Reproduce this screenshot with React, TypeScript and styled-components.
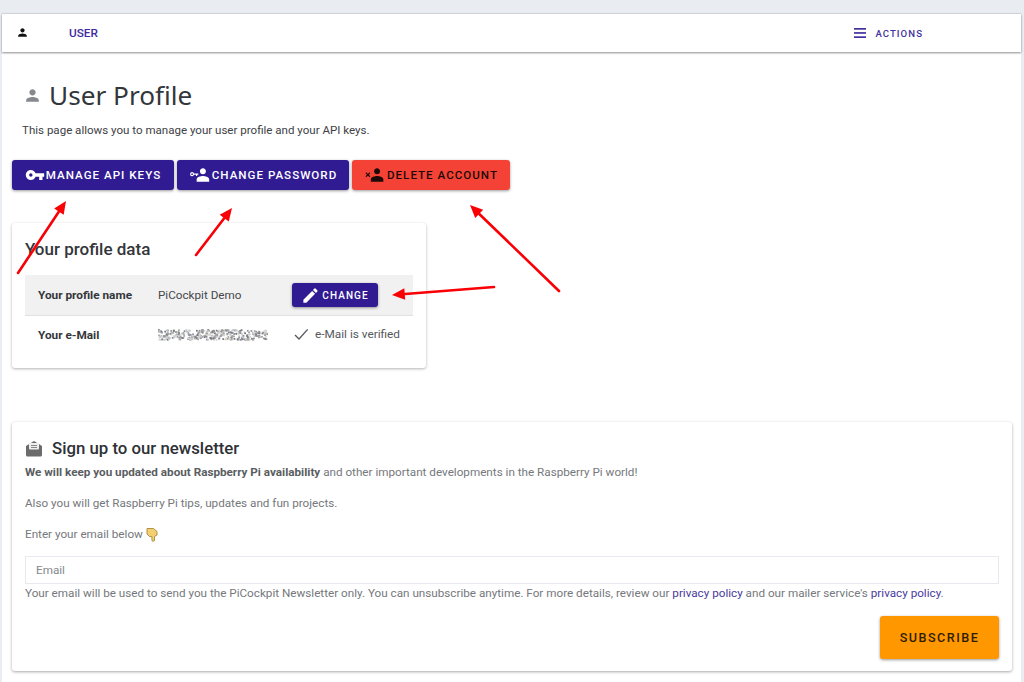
import * as React from 'react'
import styled, { createGlobalStyle } from 'styled-components'

const GlobalStyle = createGlobalStyle`
  html, body {
    margin: 0;
    padding: 0;
    height: 682px;
    overflow: hidden;
    background: #e9edf2;
    font-family: Roboto, "Liberation Sans", sans-serif;
  }
`

const Page = styled.div`
  position: relative;
  width: 1024px;
  height: 682px;
  padding: 14px 3px 0 2px;
  box-sizing: border-box;
  overflow: hidden;
`

const Surface = styled.div`
  background: #fff;
  height: 668px;
  border-radius: 2px 2px 0 0;
`

const TopBar = styled.div`
  height: 38px;
  display: flex;
  align-items: center;
  background: #fff;
  box-shadow: 0 1px 2px rgba(0, 0, 0, 0.45), 0 -1px 1px rgba(0, 0, 0, 0.08);
  padding: 0 0 2px 14px;
  box-sizing: border-box;
`

const UserLink = styled.span`
  margin-top: 2px;
  margin-left: 40px;
  font-size: 11.8px;
  font-weight: 500;
  color: #3f2ba0;
`

const ActionsGroup = styled.div`
  margin-top: 2px;
  margin-left: auto;
  margin-right: 98px;
  display: flex;
  align-items: center;
  gap: 9px;
  font-size: 9.6px;
  font-weight: 500;
  letter-spacing: 1.05px;
  color: #43329e;
`

const Content = styled.div`
  padding: 25px 9px 0 10px;
`

const TitleRow = styled.div`
  display: flex;
  align-items: center;
  gap: 7px;
  padding-left: 11px;
  height: 36px;
`

const Title = styled.h1`
  margin: 0;
  font-family: "Noto Sans", sans-serif;
  font-size: 26.2px;
  font-weight: 400;
  color: #33363a;
`

const Lead = styled.p`
  margin: 9px 0 0 10px;
  font-size: 11.55px;
  line-height: 16px;
  color: #3e4145;
`

const ButtonRow = styled.div`
  margin-top: 22px;
  display: flex;
  gap: 3px;
`

const ActionButton = styled.button<{ $tone: 'primary' | 'danger'; $w: number }>`
  width: ${p => p.$w}px;
  height: 30px;
  border: 0;
  border-radius: 3px;
  padding: 0;
  display: flex;
  align-items: center;
  justify-content: center;
  gap: 1px;
  font-family: inherit;
  font-size: 11.6px;
  font-weight: 500;
  letter-spacing: 1px;
  background: ${p => (p.$tone === 'danger' ? '#f44336' : '#311b92')};
  color: ${p => (p.$tone === 'danger' ? '#1c0a08' : '#fff')};
  box-shadow: 0 1px 3px rgba(0, 0, 0, 0.4);
`

const ProfileCard = styled.section`
  margin-top: 33px;
  width: 414px;
  height: 145px;
  background: #fff;
  border-radius: 3px;
  padding: 14px 13px 0;
  box-sizing: border-box;
  box-shadow: 0 1px 3px rgba(0, 0, 0, 0.3);
`

const CardTitle = styled.h2`
  margin: 0;
  font-size: 17px;
  line-height: 24px;
  font-weight: 500;
  color: #33363a;
`

const DataRow = styled.div<{ $shaded?: boolean }>`
  display: flex;
  align-items: center;
  height: ${p => (p.$shaded ? 40 : 38)}px;
  margin-top: ${p => (p.$shaded ? 14 : 0)}px;
  padding-left: 13px;
  font-size: 11.7px;
  color: #44474b;
  background: ${p => (p.$shaded ? '#f1f1f1' : 'transparent')};
  border-bottom: ${p => (p.$shaded ? '1px solid #dfe1e4' : '0')};
`

const DataLabel = styled.span`
  width: 120px;
  font-size: 11.8px;
  font-weight: 700;
  color: #33363a;
`

const DataValue = styled.span`
  width: 134px;
`

const ChangeButton = styled.button`
  width: 86px;
  height: 24px;
  border: 0;
  border-radius: 3px;
  padding: 0;
  display: flex;
  align-items: center;
  justify-content: center;
  gap: 2px;
  font-family: inherit;
  font-size: 10px;
  font-weight: 500;
  letter-spacing: 1.1px;
  background: #311b92;
  color: #fff;
  box-shadow: 0 1px 3px rgba(0, 0, 0, 0.4);
`

const Verified = styled.span`
  display: flex;
  align-items: center;
  gap: 6px;
  margin-top: -2px;
  margin-left: 1px;
  font-size: 11.8px;
  color: #55585c;
`

const NewsCard = styled.section`
  margin-top: 54px;
  height: 249px;
  background: #fff;
  border-radius: 3px;
  padding: 14px 13px 0;
  box-sizing: border-box;
  box-shadow: 0 1px 3px rgba(0, 0, 0, 0.35);
`

const NewsHeading = styled.div`
  display: flex;
  align-items: center;
  gap: 9px;
  height: 24px;
  margin-bottom: 4px;
  font-size: 16.8px;
  font-weight: 500;
  color: #2e3135;
`

const NewsText = styled.p`
  margin: 0 0 15px;
  font-size: 11.7px;
  line-height: 16px;
  color: #75787c;

  b {
    color: #5a5d61;
    font-weight: 700;
  }
`

const EnterText = styled(NewsText)`
  display: flex;
  align-items: center;
  gap: 3px;
  margin-bottom: 14px;
`

const EmailField = styled.div`
  height: 28px;
  border: 1px solid #e8e9ef;
  box-sizing: border-box;
  display: flex;
  align-items: center;
  padding-left: 10px;
  font-size: 11.7px;
  color: #85888c;
`

const FinePrint = styled.p`
  margin: 1px 0 0;
  font-size: 11.7px;
  line-height: 16px;
  white-space: nowrap;
  color: #75787c;

  a {
    color: #4a3a9e;
    text-decoration: none;
  }
`

const SubmitRow = styled.div`
  display: flex;
  justify-content: flex-end;
  margin-top: 15px;
`

const SubscribeButton = styled.button`
  width: 119px;
  height: 43px;
  border: 0;
  border-radius: 3px;
  padding: 0;
  font-family: inherit;
  font-size: 12.6px;
  font-weight: 500;
  letter-spacing: 1.5px;
  background: #ff9800;
  color: #2e1c00;
  box-shadow: 0 1px 3px rgba(0, 0, 0, 0.4);
`

const ArrowLayer = styled.svg`
  position: absolute;
  left: 0;
  top: 0;
  pointer-events: none;
`

const BlurredMail = styled.svg`
  filter: blur(0.5px);
  display: block;
`

const PersonIcon = ({ size, color }: { size: number; color: string }) => (
  <svg width={size} height={size} viewBox="0 0 24 24" fill={color}>
    <path d="M12 12c2.200 0 4-1.800 4-4s-1.800-4-4-4-4 1.800-4 4 1.800 4 4 4zm0 2c-2.700 0-8 1.300-8 4v2h16v-2c0-2.700-5.300-4-8-4z" />
  </svg>
)

const KeyIcon = () => (
  <svg width="20" height="20" viewBox="0 0 24 24" fill="#fff">
    <path d="M12.650 10C11.830 7.670 9.610 6 7 6c-3.310 0-6 2.690-6 6s2.690 6 6 6c2.610 0 4.830-1.670 5.650-4H17v4h4v-4h2v-4H12.650zM7 14c-1.100 0-2-.9-2-2s.9-2 2-2 2 .9 2 2-.9 2-2 2z" />
  </svg>
)

const UserKeyIcon = () => (
  <svg width="22" height="20" viewBox="0 0 26 24" fill="#fff">
    <path d="M16.500 11c2 0 3.600-1.600 3.600-3.600S18.500 3.800 16.500 3.800s-3.600 1.600-3.600 3.600 1.600 3.600 3.600 3.600zm0 2.200c-2.600 0-7.500 1.300-7.500 3.700V20h15v-3.100c0-2.400-4.900-3.700-7.500-3.700z" />
    <path d="M3.500 8.500a2.500 2.500 0 0 1 2.400 1.800H11v1.500H9.700v1.500H8.200v-1.500H5.900a2.500 2.500 0 1 1-2.400-3.300zm0 1.500a1 1 0 1 0 0 2 1 1 0 0 0 0-2z" />
  </svg>
)

const UserRemoveIcon = () => (
  <svg width="22" height="20" viewBox="0 0 26 24" fill="#1c0a08">
    <path d="M15.500 11c2 0 3.600-1.600 3.600-3.600s-1.600-3.600-3.600-3.600-3.600 1.600-3.600 3.600 1.600 3.600 3.600 3.600zm0 2.200c-2.600 0-7.500 1.300-7.500 3.700V20h15v-3.100c0-2.400-4.900-3.700-7.500-3.700z" />
    <path d="M2.600 8.800l1.900 1.900 1.900-1.900 1 1-1.900 1.900 1.900 1.900-1 1-1.900-1.900-1.900 1.900-1-1 1.900-1.900-1.900-1.900z" />
  </svg>
)

const PencilIcon = () => (
  <svg width="19" height="19" viewBox="0 0 24 24" fill="#fff">
    <path d="M3 17.250V21h3.750L17.810 9.940l-3.750-3.750L3 17.250zM20.710 7.040a1 1 0 0 0 0-1.410l-2.340-2.340a1 1 0 0 0-1.410 0l-1.830 1.830 3.750 3.750 1.830-1.830z" />
  </svg>
)

const CheckIcon = () => (
  <svg width="16" height="16" viewBox="0 0 24 24" fill="none" stroke="#55585c" strokeWidth="2">
    <path d="M3 13.500l6 6L22 5" />
  </svg>
)

const MenuIcon = () => (
  <svg width="12" height="10" viewBox="0 0 12 10" fill="#43329e">
    <rect width="12" height="1.700" />
    <rect y="4.100" width="12" height="1.700" />
    <rect y="8.300" width="12" height="1.700" />
  </svg>
)

const MailIcon = () => (
  <svg width="18" height="17" viewBox="0 0 18 17">
    <path d="M1 6l8-5 8 5v9a1.500 1.500 0 0 1-1.500 1.500h-13A1.500 1.500 0 0 1 1 15z" fill="#6b6b6b" />
    <rect x="4" y="3" width="10" height="6.500" rx="1" fill="#eee" />
    <rect x="6" y="5" width="6" height="1" fill="#888" />
    <rect x="6" y="7" width="6" height="1" fill="#888" />
  </svg>
)

const PointingHand = () => (
  <svg width="12" height="15" viewBox="0 0 12 15">
    <path
      d="M1 1.500h6.500l3.500 3v3.500l-2.500 1.500v3.500a1.300 1.300 0 0 1-2.600 0V9.500H3.500L1 7z"
      fill="#f3cf72"
      stroke="#a98a3c"
      strokeWidth="0.9"
    />
  </svg>
)

// scribbled-out address, the picture has it pixelated
const noiseDots = Array.from({ length: 340 }, (_, i) => {
  const a = Math.abs(Math.sin(i * 12.9898) * 43758.5453) % 1
  const b = Math.abs(Math.sin(i * 78.233) * 24634.6345) % 1
  const shade = ['#8f929c', '#c3c6cc', '#777a82', '#d8d6d0', '#a8a49c'][i % 5]
  return { x: a * 109, y: 1 + b * 10, shade }
})

const RedactedMail = () => (
  <BlurredMail width="110" height="14" viewBox="0 0 110 14">
    {noiseDots.map((d, i) => (
      <rect key={i} x={d.x} y={d.y} width="1.800" height="1.800" fill={d.shade} />
    ))}
  </BlurredMail>
)

const arrows = [
  { from: [18, 273], to: [66, 201] },
  { from: [196, 255], to: [232, 208] },
  { from: [559, 291], to: [470, 205] },
  { from: [494, 287], to: [392, 295] },
]

const Arrows = () => (
  <ArrowLayer width="1024" height="682">
    {arrows.map(({ from, to }, i) => {
      const ang = Math.atan2(to[1] - from[1], to[0] - from[0])
      const head = 14
      const spread = 0.42
      const neck = [to[0] - 10 * Math.cos(ang), to[1] - 10 * Math.sin(ang)]
      const p1 = [to[0] - head * Math.cos(ang - spread), to[1] - head * Math.sin(ang - spread)]
      const p2 = [to[0] - head * Math.cos(ang + spread), to[1] - head * Math.sin(ang + spread)]
      return (
        <g key={i}>
          <line x1={from[0]} y1={from[1]} x2={neck[0]} y2={neck[1]} stroke="#fa0005" strokeWidth="2.6" strokeLinecap="round" />
          <polygon points={`${to[0]},${to[1]} ${p1.join(',')} ${p2.join(',')}`} fill="#fa0005" />
        </g>
      )
    })}
  </ArrowLayer>
)

export default function App() {
  return (
    <Page>
      <GlobalStyle />
      <Surface>
        <TopBar>
          <PersonIcon size={13} color="#111" />
          <UserLink>USER</UserLink>
          <ActionsGroup>
            <MenuIcon />
            ACTIONS
          </ActionsGroup>
        </TopBar>
        <Content>
          <TitleRow>
            <PersonIcon size={19} color="#85888c" />
            <Title>User Profile</Title>
          </TitleRow>
          <Lead>This page allows you to manage your user profile and your API keys.</Lead>
          <ButtonRow>
            <ActionButton $tone="primary" $w={162}>
              <KeyIcon />
              MANAGE API KEYS
            </ActionButton>
            <ActionButton $tone="primary" $w={172}>
              <UserKeyIcon />
              CHANGE PASSWORD
            </ActionButton>
            <ActionButton $tone="danger" $w={158}>
              <UserRemoveIcon />
              DELETE ACCOUNT
            </ActionButton>
          </ButtonRow>
          <ProfileCard>
            <CardTitle>Your profile data</CardTitle>
            <DataRow $shaded>
              <DataLabel>Your profile name</DataLabel>
              <DataValue>PiCockpit Demo</DataValue>
              <ChangeButton>
                <PencilIcon />
                CHANGE
              </ChangeButton>
            </DataRow>
            <DataRow>
              <DataLabel>Your e-Mail</DataLabel>
              <DataValue>
                <RedactedMail />
              </DataValue>
              <Verified>
                <CheckIcon />
                e-Mail is verified
              </Verified>
            </DataRow>
          </ProfileCard>
          <NewsCard>
            <NewsHeading>
              <MailIcon />
              Sign up to our newsletter
            </NewsHeading>
            <NewsText>
              <b>We will keep you updated about Raspberry Pi availability</b> and other important
              developments in the Raspberry Pi world!
            </NewsText>
            <NewsText>Also you will get Raspberry Pi tips, updates and fun projects.</NewsText>
            <EnterText>
              Enter your email below <PointingHand />
            </EnterText>
            <EmailField>Email</EmailField>
            <FinePrint>
              Your email will be used to send you the PiCockpit Newsletter only. You can unsubscribe
              anytime. For more details, review our <a>privacy policy</a> and our mailer service's{' '}
              <a>privacy policy</a>.
            </FinePrint>
            <SubmitRow>
              <SubscribeButton>SUBSCRIBE</SubscribeButton>
            </SubmitRow>
          </NewsCard>
        </Content>
      </Surface>
      <Arrows />
    </Page>
  )
}
